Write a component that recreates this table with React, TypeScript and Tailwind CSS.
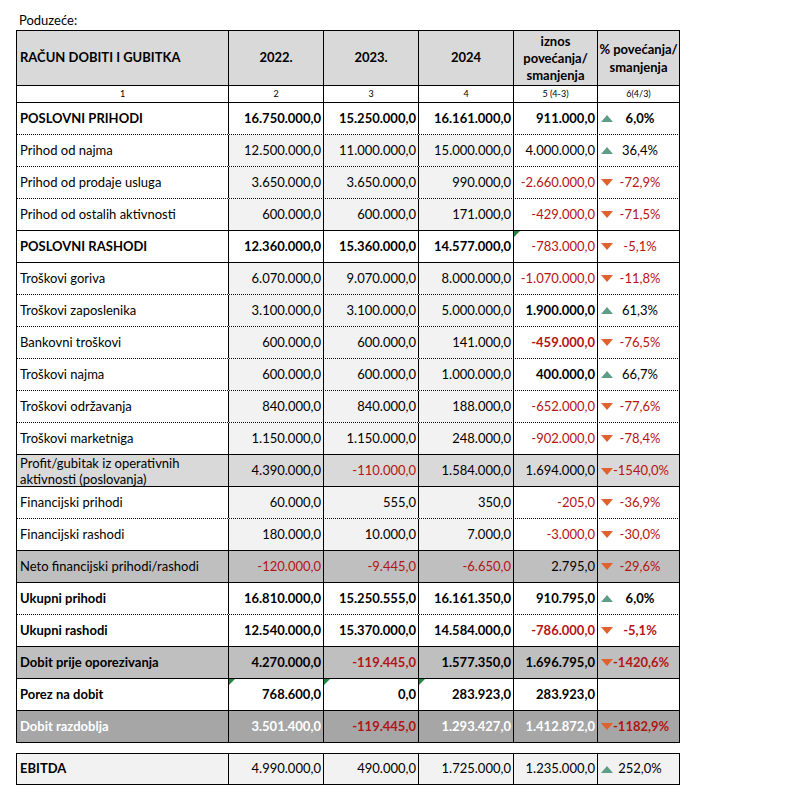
import React from 'react';

type Cell = { v: string; red?: boolean; bold?: boolean; mark?: boolean };
type Pct = Cell & { dir: 'up' | 'down' };
type Row = {
  label: string;
  bold?: boolean;
  bg: string;
  mid?: boolean;
  white?: boolean;
  dotted?: boolean;
  tall?: boolean;
  cells: Cell[];
  pct?: Pct;
};

const rows: Row[] = [
  {
    label: 'POSLOVNI PRIHODI',
    bold: true,
    bg: 'bg-white',
    dotted: true,
    cells: [{ v: '16.750.000,0' }, { v: '15.250.000,0' }, { v: '16.161.000,0' }, { v: '911.000,0' }],
    pct: { v: '6,0%', dir: 'up' },
  },
  {
    label: 'Prihod od najma',
    bg: 'bg-white',
    mid: true,
    dotted: true,
    cells: [{ v: '12.500.000,0' }, { v: '11.000.000,0' }, { v: '15.000.000,0' }, { v: '4.000.000,0' }],
    pct: { v: '36,4%', dir: 'up' },
  },
  {
    label: 'Prihod od prodaje usluga',
    bg: 'bg-white',
    mid: true,
    dotted: true,
    cells: [{ v: '3.650.000,0' }, { v: '3.650.000,0' }, { v: '990.000,0' }, { v: '-2.660.000,0', red: true }],
    pct: { v: '-72,9%', dir: 'down', red: true },
  },
  {
    label: 'Prihod od ostalih aktivnosti',
    bg: 'bg-white',
    mid: true,
    cells: [{ v: '600.000,0' }, { v: '600.000,0' }, { v: '171.000,0' }, { v: '-429.000,0', red: true }],
    pct: { v: '-71,5%', dir: 'down', red: true },
  },
  {
    label: 'POSLOVNI RASHODI',
    bold: true,
    bg: 'bg-white',
    cells: [
      { v: '12.360.000,0' },
      { v: '15.360.000,0' },
      { v: '14.577.000,0' },
      { v: '-783.000,0', red: true, bold: false, mark: true },
    ],
    pct: { v: '-5,1%', dir: 'down', red: true, bold: false },
  },
  {
    label: 'Troškovi goriva',
    bg: 'bg-white',
    mid: true,
    dotted: true,
    cells: [{ v: '6.070.000,0' }, { v: '9.070.000,0' }, { v: '8.000.000,0' }, { v: '-1.070.000,0', red: true }],
    pct: { v: '-11,8%', dir: 'down', red: true },
  },
  {
    label: 'Troškovi zaposlenika',
    bg: 'bg-white',
    mid: true,
    dotted: true,
    cells: [{ v: '3.100.000,0' }, { v: '3.100.000,0' }, { v: '5.000.000,0' }, { v: '1.900.000,0', bold: true }],
    pct: { v: '61,3%', dir: 'up' },
  },
  {
    label: 'Bankovni troškovi',
    bg: 'bg-white',
    mid: true,
    dotted: true,
    cells: [{ v: '600.000,0' }, { v: '600.000,0' }, { v: '141.000,0' }, { v: '-459.000,0', red: true, bold: true }],
    pct: { v: '-76,5%', dir: 'down', red: true },
  },
  {
    label: 'Troškovi najma',
    bg: 'bg-white',
    mid: true,
    dotted: true,
    cells: [{ v: '600.000,0' }, { v: '600.000,0' }, { v: '1.000.000,0' }, { v: '400.000,0', bold: true }],
    pct: { v: '66,7%', dir: 'up' },
  },
  {
    label: 'Troškovi održavanja',
    bg: 'bg-white',
    mid: true,
    dotted: true,
    cells: [{ v: '840.000,0' }, { v: '840.000,0' }, { v: '188.000,0' }, { v: '-652.000,0', red: true }],
    pct: { v: '-77,6%', dir: 'down', red: true },
  },
  {
    label: 'Troškovi marketniga',
    bg: 'bg-white',
    mid: true,
    cells: [{ v: '1.150.000,0' }, { v: '1.150.000,0' }, { v: '248.000,0' }, { v: '-902.000,0', red: true }],
    pct: { v: '-78,4%', dir: 'down', red: true },
  },
  {
    label: 'Profit/gubitak iz operativnih aktivnosti (poslovanja)',
    bg: 'bg-[#d9d9d9]',
    tall: true,
    cells: [{ v: '4.390.000,0' }, { v: '-110.000,0', red: true }, { v: '1.584.000,0' }, { v: '1.694.000,0' }],
    pct: { v: '-1540,0%', dir: 'down', red: true },
  },
  {
    label: 'Financijski prihodi',
    bg: 'bg-white',
    mid: true,
    dotted: true,
    cells: [{ v: '60.000,0' }, { v: '555,0' }, { v: '350,0' }, { v: '-205,0', red: true }],
    pct: { v: '-36,9%', dir: 'down', red: true },
  },
  {
    label: 'Financijski rashodi',
    bg: 'bg-white',
    mid: true,
    cells: [{ v: '180.000,0' }, { v: '10.000,0' }, { v: '7.000,0' }, { v: '-3.000,0', red: true }],
    pct: { v: '-30,0%', dir: 'down', red: true },
  },
  {
    label: 'Neto financijski prihodi/rashodi',
    bg: 'bg-[#bfbfbf]',
    cells: [{ v: '-120.000,0', red: true }, { v: '-9.445,0', red: true }, { v: '-6.650,0', red: true }, { v: '2.795,0' }],
    pct: { v: '-29,6%', dir: 'down', red: true },
  },
  {
    label: 'Ukupni prihodi',
    bold: true,
    bg: 'bg-white',
    dotted: true,
    cells: [{ v: '16.810.000,0' }, { v: '15.250.555,0' }, { v: '16.161.350,0' }, { v: '910.795,0' }],
    pct: { v: '6,0%', dir: 'up' },
  },
  {
    label: 'Ukupni rashodi',
    bold: true,
    bg: 'bg-white',
    cells: [{ v: '12.540.000,0' }, { v: '15.370.000,0' }, { v: '14.584.000,0' }, { v: '-786.000,0', red: true }],
    pct: { v: '-5,1%', dir: 'down', red: true },
  },
  {
    label: 'Dobit prije oporezivanja',
    bold: true,
    bg: 'bg-[#bfbfbf]',
    cells: [{ v: '4.270.000,0' }, { v: '-119.445,0', red: true }, { v: '1.577.350,0' }, { v: '1.696.795,0' }],
    pct: { v: '-1420,6%', dir: 'down', red: true },
  },
  {
    label: 'Porez na dobit',
    bold: true,
    bg: 'bg-white',
    cells: [{ v: '768.600,0', mark: true }, { v: '0,0', mark: true }, { v: '283.923,0', mark: true }, { v: '283.923,0' }],
  },
  {
    label: 'Dobit razdoblja',
    bold: true,
    bg: 'bg-[#a6a6a6]',
    white: true,
    cells: [{ v: '3.501.400,0' }, { v: '-119.445,0', red: true }, { v: '1.293.427,0' }, { v: '1.412.872,0' }],
    pct: { v: '-1182,9%', dir: 'down', red: true },
  },
];

const cols = 'grid grid-cols-[212px_95px_95px_95px_84px_82px]';

function Arrow({ dir }: { dir: 'up' | 'down' }) {
  return dir === 'up' ? (
    <svg width="12" height="7" viewBox="0 0 12 7" className="shrink-0">
      <polygon points="6,0 12,7 0,7" fill="#5e9e86" />
    </svg>
  ) : (
    <svg width="12" height="7" viewBox="0 0 12 7" className="shrink-0">
      <polygon points="0,0 12,0 6,7" fill="#e0602e" />
    </svg>
  );
}

function Mark() {
  return (
    <svg width="6" height="6" viewBox="0 0 6 6" className="absolute left-0 top-0">
      <polygon points="0,0 6,0 0,6" fill="#1f8a3c" />
    </svg>
  );
}

function textColor(c: Cell, row: Row) {
  if (c.red) return 'text-[#b41414]';
  if (row.white) return 'text-white';
  return 'text-black';
}

function DataRow({ row }: { row: Row }) {
  const rowBold = !!row.bold;
  return (
    <div
      className={`${cols} h-[32px] border-b border-black ${row.dotted ? 'border-dotted' : 'border-solid'} ${row.bg}`}
    >
      <div
        className={`flex items-center border-r border-black pl-[3px] pr-1 ${row.white ? 'text-white' : 'text-black'} ${rowBold ? 'font-bold' : ''} ${row.tall ? 'leading-[16px]' : ''}`}
      >
        {row.label}
      </div>
      {row.cells.map((c, i) => {
        const bold = c.bold !== undefined ? c.bold : rowBold;
        const midBg = row.mid && i < 3 ? 'bg-[#f2f2f2]' : '';
        return (
          <div
            key={i}
            className={`relative flex items-center justify-end border-r border-black pr-[2px] ${midBg} ${textColor(c, row)} ${bold ? 'font-bold' : ''}`}
          >
            {c.mark && <Mark />}
            {c.v}
          </div>
        );
      })}
      <div className="flex items-center border-r border-black pl-[3px] pr-[12px]">
        {row.pct && (
          <>
            <Arrow dir={row.pct.dir} />
            <span
              className={`flex-1 whitespace-nowrap text-center ${textColor(row.pct, row)} ${(row.pct.bold !== undefined ? row.pct.bold : rowBold) ? 'font-bold' : ''}`}
            >
              {row.pct.v}
            </span>
          </>
        )}
      </div>
    </div>
  );
}

export default function App() {
  return (
    <div className="min-h-screen bg-white pl-[16px] pt-[11px] font-['Lato',sans-serif] text-[13px] text-black">
      <div className="h-[19px] pl-[3px] leading-[19px]">Poduzeće:</div>

      <div className="w-[664px] border-l border-t border-black">
        {/* header */}
        <div className={`${cols} h-[55px] border-b border-black bg-[#d9d9d9] font-bold`}>
          <div className="flex items-center border-r border-black pl-[3px]">RAČUN DOBITI I GUBITKA</div>
          <div className="flex items-center justify-center border-r border-black">2022.</div>
          <div className="flex items-center justify-center border-r border-black">2023.</div>
          <div className="flex items-center justify-center border-r border-black">2024</div>
          <div className="flex items-center justify-center border-r border-black text-center leading-[17px]">
            iznos
            <br />
            povećanja/
            <br />
            smanjenja
          </div>
          <div className="flex items-center justify-center border-r border-black text-center leading-[18px]">
            % povećanja/
            <br />
            smanjenja
          </div>
        </div>

        {/* index row */}
        <div className={`${cols} h-[17px] border-b border-black text-[9px] leading-[16px]`}>
          <div className="border-r border-black text-center">1</div>
          <div className="border-r border-black text-center">2</div>
          <div className="border-r border-black text-center">3</div>
          <div className="border-r border-black text-center">4</div>
          <div className="border-r border-black text-center">5 (4-3)</div>
          <div className="border-r border-black text-center">6(4/3)</div>
        </div>

        {rows.map((r) => (
          <DataRow key={r.label} row={r} />
        ))}
      </div>

      {/* EBITDA */}
      <div className="mt-[10px] w-[664px] border-l border-t border-black">
        <div className={`${cols} h-[31px] border-b border-black bg-[#f2f2f2]`}>
          <div className="flex items-center border-r border-black pl-[3px] font-bold">EBITDA</div>
          <div className="flex items-center justify-end border-r border-black pr-[2px]">4.990.000,0</div>
          <div className="flex items-center justify-end border-r border-black pr-[2px]">490.000,0</div>
          <div className="flex items-center justify-end border-r border-black pr-[2px]">1.725.000,0</div>
          <div className="flex items-center justify-end border-r border-black pr-[2px]">1.235.000,0</div>
          <div className="flex items-center border-r border-black pl-[3px] pr-[12px]">
            <Arrow dir="up" />
            <span className="flex-1 text-center">252,0%</span>
          </div>
        </div>
      </div>
    </div>
  );
}
